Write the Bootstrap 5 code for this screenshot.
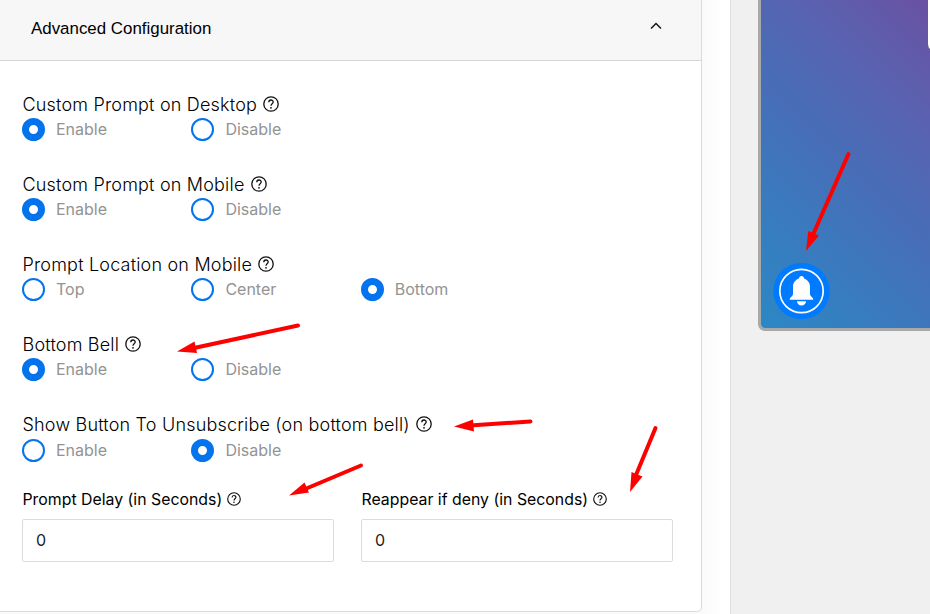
<!DOCTYPE html>
<html lang="en">
<head>
<meta charset="utf-8">
<meta name="viewport" content="width=device-width, initial-scale=1">
<title>Advanced Configuration</title>
<link href="https://cdn.jsdelivr.net/npm/bootstrap@5.3.0/dist/css/bootstrap.min.css" rel="stylesheet">
<style>
  body { height: 614px; background: #f0f0f0; font-family: Inter, "Liberation Sans", sans-serif; color: #111; }
  .settings { width: 731px; height: 614px; background: linear-gradient(90deg, #fafafa 702px, #fff 722px); border-right: 1px solid #dedede; }
  .panel { width: 702px; height: 612px; border: 1px solid #dbdbdb; border-width: 0 1px 1px 0; border-radius: 0 0 5px 0; }
  .panel-top { height: 61px; background: #f7f7f7; border-bottom: 1px solid #d6d6d6; padding: 0 38px 2px 31px; }
  .panel-title { font: 400 16.9px/24px "Liberation Sans", Arial, sans-serif; color: #000; }
  .panel-title + svg { margin-top: -6px; }
  .panel-content { padding: 32px 28px 0 22px; }
  .group { height: 80.1px; }
  .group-title { font-size: 18px; font-weight: 300; line-height: 24px; letter-spacing: .19px; gap: 6px; padding-left: .5px; color: #000; }
  .group-title svg { margin-top: -2px; }
  .field svg { margin-top: -1px; }
  .choice { width: 169.4px; height: 23px; gap: 11px; margin-top: 1.2px; font-size: 16px; line-height: 23px; color: #939393; }
  .dot { width: 23px; height: 23px; flex: none; margin: 0; appearance: none; border: 2px solid #0473ee; border-radius: 50%; background: #fff; }
  .dot:checked { border-width: 7px; }
  .fields { gap: 27px; padding-top: 2px; margin-top: -7.5px; }
  .field { width: 312px; }
  .field label { font-size: 15.85px; line-height: 24px; gap: 5px; padding-left: .5px; color: #000; }
  .field input { height: 43px; margin-top: 7px; padding: 0 13px; border: 1px solid #dcdcdc; border-radius: 2px; font-size: 16px; color: #222; }
  .preview { position: relative; width: 176px; height: 331px; margin-left: 27px; border: solid #a9a9a9; border-width: 0 0 3px 3px; border-bottom-left-radius: 7px; background: #a9a9a9; overflow: hidden; }
  .scene { background: linear-gradient(45deg, #2b88c5 0%, #466fb8 48%, #5a61b0 75%, #6b50a0 100%); }
  .popup { position: absolute; left: 167px; top: -10px; width: 20px; height: 62px; border-radius: 8px; background: #fff; }
  .bell { position: absolute; left: 12px; top: 263px; }
  .arrows { position: absolute; left: 0; top: 0; pointer-events: none; }
</style>
</head>
<body class="d-flex position-relative overflow-hidden">
<svg class="d-none">
  <symbol id="help" viewBox="0 0 16 16"><circle cx="8" cy="8" r="7.2" fill="none" stroke="#111" stroke-width="1.3"/><path d="M5.8 6.2C5.8 3.3 10.2 3.3 10.2 6.1C10.2 7.8 8 7.8 8 9.7" fill="none" stroke="#111" stroke-width="1.3"/><circle cx="8" cy="11.8" r=".9" fill="#111"/></symbol>
</svg>
<main class="settings flex-shrink-0">
  <section class="panel bg-white overflow-hidden">
    <header class="panel-top d-flex align-items-center justify-content-between">
      <span class="panel-title">Advanced Configuration</span>
      <svg width="14" height="10" viewBox="0 0 14 10"><path d="M2 7.5L7 2.5L12 7.5" fill="none" stroke="#111" stroke-width="1.4"/></svg>
    </header>
    <form class="panel-content">
      <div class="group">
        <div class="group-title d-flex align-items-center"><span>Custom Prompt on Desktop</span><svg width="16" height="16"><use href="#help"/></svg></div>
        <div class="d-flex"><label class="choice d-flex"><input class="dot" type="radio" name="desktop" checked>Enable</label><label class="choice d-flex"><input class="dot" type="radio" name="desktop">Disable</label></div>
      </div>
      <div class="group">
        <div class="group-title d-flex align-items-center"><span>Custom Prompt on Mobile</span><svg width="16" height="16"><use href="#help"/></svg></div>
        <div class="d-flex"><label class="choice d-flex"><input class="dot" type="radio" name="mobile" checked>Enable</label><label class="choice d-flex"><input class="dot" type="radio" name="mobile">Disable</label></div>
      </div>
      <div class="group">
        <div class="group-title d-flex align-items-center"><span>Prompt Location on Mobile</span><svg width="16" height="16"><use href="#help"/></svg></div>
        <div class="d-flex"><label class="choice d-flex"><input class="dot" type="radio" name="place">Top</label><label class="choice d-flex"><input class="dot" type="radio" name="place">Center</label><label class="choice d-flex"><input class="dot" type="radio" name="place" checked>Bottom</label></div>
      </div>
      <div class="group">
        <div class="group-title d-flex align-items-center"><span>Bottom Bell</span><svg width="16" height="16"><use href="#help"/></svg></div>
        <div class="d-flex"><label class="choice d-flex"><input class="dot" type="radio" name="bell" checked>Enable</label><label class="choice d-flex"><input class="dot" type="radio" name="bell">Disable</label></div>
      </div>
      <div class="group">
        <div class="group-title d-flex align-items-center"><span>Show Button To Unsubscribe (on bottom bell)</span><svg width="16" height="16"><use href="#help"/></svg></div>
        <div class="d-flex"><label class="choice d-flex"><input class="dot" type="radio" name="unsub">Enable</label><label class="choice d-flex"><input class="dot" type="radio" name="unsub" checked>Disable</label></div>
      </div>
      <div class="fields d-flex">
        <div class="field"><label class="d-flex align-items-center" for="delay"><span>Prompt Delay (in Seconds)</span><svg width="14" height="14"><use href="#help"/></svg></label><input class="w-100" id="delay" type="text" value="0"></div>
        <div class="field"><label class="d-flex align-items-center" for="again"><span>Reappear if deny (in Seconds)</span><svg width="14" height="14"><use href="#help"/></svg></label><input class="w-100" id="again" type="text" value="0"></div>
      </div>
    </form>
  </section>
</main>
<aside class="preview flex-shrink-0">
  <div class="scene h-100"></div>
  <div class="popup"></div>
  <svg class="bell" width="57" height="57" viewBox="0 0 57 57"><circle cx="28.5" cy="28" r="28.2" fill="#007bff"/><circle cx="28.5" cy="28" r="21.7" fill="none" stroke="#fff" stroke-width="1.7"/><path d="M28.5 13C30 13 31 14 31 15.6C34.7 16.8 37 20 37 24V31C37 33.5 40.3 34 40.3 36.8H16.7C16.7 34 20 33.5 20 31V24C20 20 22.3 16.8 26 15.6C26 14 27 13 28.5 13Z" fill="#fff"/><path d="M24 38.3H33C33 40.7 31 42.6 28.5 42.6S24 40.7 24 38.3Z" fill="#fff"/></svg>
</aside>
<svg class="arrows" width="930" height="614" viewBox="0 0 930 614">
  <g fill="none" stroke="#f00" stroke-width="4" stroke-linecap="round"><path d="M848.5 154L812 237"/><path d="M298 325.5L194 348"/><path d="M530.5 421.5L470 425.5"/><path d="M361 465.5L304 489.5"/><path d="M655.5 428L636 475"/></g>
  <g fill="#f00"><path d="M806 251L808.3 231L819 235.5Z"/><path d="M177 351.5L194.5 341.5L197 353Z"/><path d="M454 426.5L473 419.5L474 431.5Z"/><path d="M289 495.5L304.5 482.5L309 492.5Z"/><path d="M630 492L631.5 472L642.5 476.5Z"/></g>
</svg>
<script src="https://cdn.jsdelivr.net/npm/bootstrap@5.3.0/dist/js/bootstrap.bundle.min.js"></script>
</body>
</html>
